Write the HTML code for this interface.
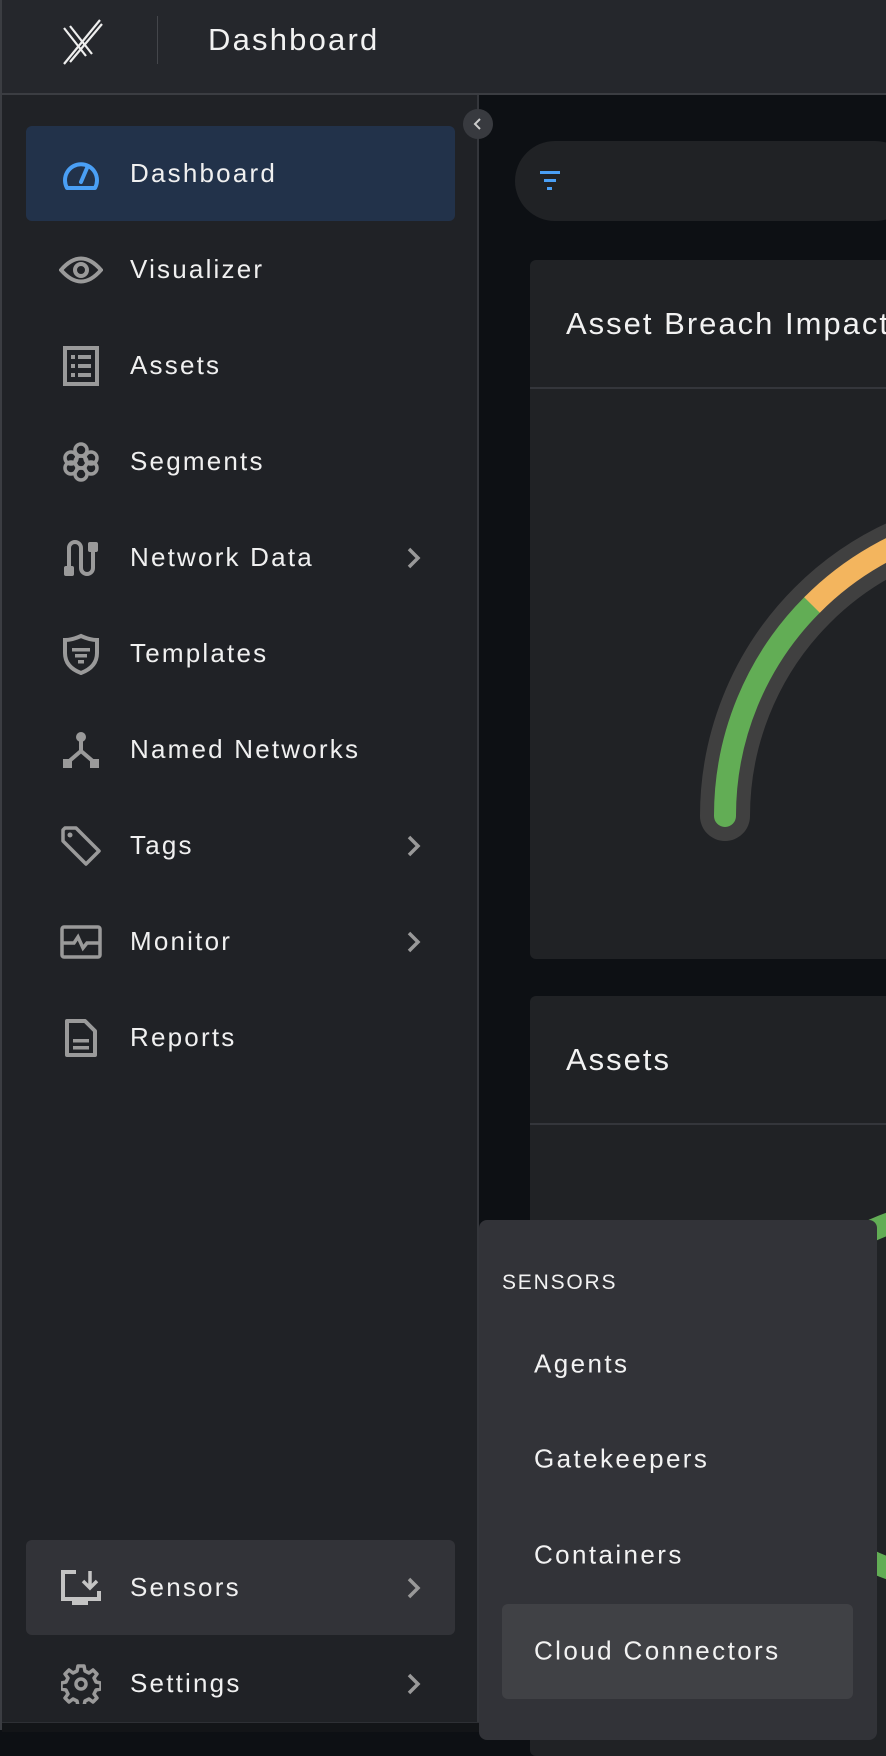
<!DOCTYPE html>
<html><head><meta charset="utf-8"><style>
*{margin:0;padding:0;box-sizing:border-box}
body{width:886px;height:1730px;overflow:hidden;background:#0d1014;font-family:"Liberation Sans",sans-serif;color:#f2f2f2;position:relative}
.abs{position:absolute}
.hdr{left:0;top:0;width:886px;height:95px;background:#25272c;border-bottom:2px solid #3b3d42;border-left:2px solid #3b3d42}
.side{left:0;top:95px;width:479px;height:1635px;background:#202226;border-right:2px solid #34363b;border-left:2px solid #3b3d42}
.item{position:absolute;left:24px;width:429px;height:95px;border-radius:6px}
.item .ic{position:absolute;left:55px;top:50%;transform:translate(-50%,-50%)}
.item .t{position:absolute;left:104px;top:50%;transform:translateY(-52%);font-size:26px;letter-spacing:2.2px;color:#f0f0f0;white-space:nowrap}
.item .ch{position:absolute;left:380px;top:50%;transform:translateY(-50%)}
.card{background:#202225;border-radius:6px}
.pop{left:479px;top:1220px;width:398px;height:520px;background:#323338;border-radius:8px}
.pop .s{position:absolute;left:55px;font-size:26px;letter-spacing:2.4px;transform:translateY(-50%);white-space:nowrap}
</style></head><body>
<div class="abs hdr">
 <svg class="abs" style="left:58px;top:16px" width="44" height="50" viewBox="0 0 44 50"><g stroke="#eee" stroke-width="2.2" fill="none"><path d="M4 12 L26 40"/><path d="M10 10 L32 38"/><path d="M4 48 L40 4"/><path d="M10 46 L42 8"/></g></svg>
 <div class="abs" style="left:155px;top:16px;width:1px;height:48px;background:#44464b"></div>
 <div class="abs" style="left:206px;top:22px;font-size:31px;letter-spacing:2.2px">Dashboard</div>
</div>
<div class="abs side">
 <div class="item" style="top:31px;background:#22324a"><svg class="ic" width="40" height="36" viewBox="0 0 40 36"><path d="M6 32 A16 16 0 1 1 34 32 Z" fill="none" stroke="#4a9ff5" stroke-width="4" stroke-linejoin="round"/><path d="M20 26 L26 12" stroke="#4a9ff5" stroke-width="4" stroke-linecap="round"/></svg><span class="t">Dashboard</span></div>
 <div class="item" style="top:127px"><svg class="ic" width="44" height="30" viewBox="0 0 44 30"><path d="M2 15 Q22 -8 42 15 Q22 38 2 15Z" fill="none" stroke="#9a9a9a" stroke-width="4"/><circle cx="22" cy="15" r="6" fill="none" stroke="#9a9a9a" stroke-width="4"/></svg><span class="t">Visualizer</span></div>
 <div class="item" style="top:223px"><svg class="ic" width="36" height="40" viewBox="0 0 36 40"><rect x="2" y="2" width="32" height="36" fill="none" stroke="#9a9a9a" stroke-width="4"/><g fill="#9a9a9a"><rect x="8" y="9" width="4" height="4"/><rect x="15" y="9" width="13" height="4"/><rect x="8" y="18" width="4" height="4"/><rect x="15" y="18" width="13" height="4"/><rect x="8" y="27" width="4" height="4"/><rect x="15" y="27" width="13" height="4"/></g></svg><span class="t">Assets</span></div>
 <div class="item" style="top:319px"><svg class="ic" width="40" height="40" viewBox="0 0 40 40"><g fill="none" stroke="#9a9a9a" stroke-width="3.5"><circle cx="20" cy="8" r="6"/><circle cx="10" cy="16" r="6"/><circle cx="30" cy="16" r="6"/><circle cx="10" cy="26" r="6"/><circle cx="30" cy="26" r="6"/><circle cx="20" cy="32" r="6"/><circle cx="20" cy="20" r="6"/></g></svg><span class="t">Segments</span></div>
 <div class="item" style="top:415px"><svg class="ic" width="40" height="40" viewBox="0 0 40 40"><path d="M8 36 V10 A6 6 0 0 1 20 10 V30 A6 6 0 0 0 32 30 V10" fill="none" stroke="#9a9a9a" stroke-width="4"/><rect x="3" y="28" width="10" height="10" rx="2" fill="#9a9a9a"/><rect x="27" y="4" width="10" height="10" rx="2" fill="#9a9a9a"/></svg><span class="t">Network Data</span><svg class="ch" width="16" height="24" viewBox="0 0 16 24"><path d="M3 3 L12 12 L3 21" fill="none" stroke="#999" stroke-width="3.5"/></svg></div>
 <div class="item" style="top:511px"><svg class="ic" width="38" height="42" viewBox="0 0 38 42"><path d="M19 3 Q28 7 35 7 V20 Q35 34 19 40 Q3 34 3 20 V7 Q10 7 19 3Z" fill="none" stroke="#9a9a9a" stroke-width="4"/><g fill="#9a9a9a"><rect x="10" y="15" width="18" height="3.5"/><rect x="13" y="21" width="12" height="3.5"/><rect x="16" y="27" width="6" height="3.5"/></g></svg><span class="t">Templates</span></div>
 <div class="item" style="top:607px"><svg class="ic" width="40" height="38" viewBox="0 0 40 38"><circle cx="20" cy="6" r="5" fill="#9a9a9a"/><path d="M20 8 V20 L6 32 M20 20 L34 32" stroke="#9a9a9a" stroke-width="4" fill="none"/><rect x="2" y="28" width="9" height="9" fill="#9a9a9a"/><rect x="29" y="28" width="9" height="9" fill="#9a9a9a"/></svg><span class="t">Named Networks</span></div>
 <div class="item" style="top:703px"><svg class="ic" width="42" height="42" viewBox="0 0 42 42"><path d="M3 5 V16 L26 39 L39 26 L16 3 H5Z" fill="none" stroke="#9a9a9a" stroke-width="3.5" stroke-linejoin="round"/><circle cx="10" cy="10" r="2.5" fill="#9a9a9a"/></svg><span class="t">Tags</span><svg class="ch" width="16" height="24" viewBox="0 0 16 24"><path d="M3 3 L12 12 L3 21" fill="none" stroke="#999" stroke-width="3.5"/></svg></div>
 <div class="item" style="top:799px"><svg class="ic" width="42" height="34" viewBox="0 0 42 34"><rect x="2" y="2" width="38" height="30" rx="2" fill="none" stroke="#9a9a9a" stroke-width="3.5"/><path d="M2 18 H14 L18 12 L23 23 L27 18 H40" fill="none" stroke="#9a9a9a" stroke-width="3.5"/></svg><span class="t">Monitor</span><svg class="ch" width="16" height="24" viewBox="0 0 16 24"><path d="M3 3 L12 12 L3 21" fill="none" stroke="#999" stroke-width="3.5"/></svg></div>
 <div class="item" style="top:895px"><svg class="ic" width="34" height="40" viewBox="0 0 34 40"><path d="M3 3 H21 L31 13 V37 H3Z" fill="none" stroke="#9a9a9a" stroke-width="4" stroke-linejoin="round"/><rect x="9" y="21" width="16" height="3.5" fill="#9a9a9a"/><rect x="9" y="28" width="16" height="3.5" fill="#9a9a9a"/></svg><span class="t">Reports</span></div>
 <div class="item" style="top:1445px;background:#323338"><svg class="ic" width="42" height="38" viewBox="0 0 42 38"><path d="M16 3 H3 V30 H39 V22" fill="none" stroke="#c4c4c4" stroke-width="4"/><rect x="12" y="30" width="16" height="6" fill="#c4c4c4"/><path d="M30 2 V18 M23 12 L30 19 L37 12" fill="none" stroke="#c4c4c4" stroke-width="3.5"/></svg><span class="t">Sensors</span><svg class="ch" width="16" height="24" viewBox="0 0 16 24"><path d="M3 3 L12 12 L3 21" fill="none" stroke="#999" stroke-width="3.5"/></svg></div>
 <div class="item" style="top:1541px"><svg class="ic" width="40" height="40" viewBox="0 0 40 40"><path d="M17 2h6l1 5 4 2 4-3 4 4-3 4 2 4 5 1v6l-5 1-2 4 3 4-4 4-4-3-4 2-1 5h-6l-1-5-4-2-4 3-4-4 3-4-2-4-5-1v-6l5-1 2-4-3-4 4-4 4 3 4-2z" fill="none" stroke="#9a9a9a" stroke-width="3.5" stroke-linejoin="round"/><circle cx="20" cy="20" r="5" fill="none" stroke="#9a9a9a" stroke-width="3.5"/></svg><span class="t">Settings</span><svg class="ch" width="16" height="24" viewBox="0 0 16 24"><path d="M3 3 L12 12 L3 21" fill="none" stroke="#999" stroke-width="3.5"/></svg></div>
 <div class="abs" style="left:0;top:1627px;width:548px;height:10px;background:#131518;border-top:1px solid #2e3035"></div>
</div>
<div class="abs" style="left:463px;top:109px;width:30px;height:30px;border-radius:50%;background:#383a3f"><svg class="abs" style="left:9px;top:8px" width="12" height="14" viewBox="0 0 12 14"><path d="M8 2 L3 7 L8 12" fill="none" stroke="#ccc" stroke-width="2"/></svg></div>
<div class="abs" style="left:515px;top:141px;width:400px;height:80px;border-radius:40px;background:#202225"><svg class="abs" style="left:23px;top:28px" width="24" height="24" viewBox="0 0 24 24"><g fill="#4a9ff5"><rect x="2" y="2" width="20" height="3"/><rect x="6" y="10" width="12" height="3"/><rect x="9" y="18" width="5" height="3"/></g></svg></div>
<div class="abs card" style="left:530px;top:260px;width:400px;height:699px;overflow:hidden">
 <div class="abs" style="left:36px;top:46px;font-size:31px;letter-spacing:2px;white-space:nowrap">Asset Breach Impact</div>
 <div class="abs" style="left:0;top:127px;width:400px;height:2px;background:#34363b"></div>
 <svg class="abs" style="left:0;top:0" width="400" height="699"><path d="M195 556 A298 298 0 0 1 493 258" fill="none" stroke="#404040" stroke-width="50" stroke-linecap="round"/><path d="M195 556 A298 298 0 0 1 282 345" fill="none" stroke="#62ad55" stroke-width="22" stroke-linecap="round"/><path d="M282 345 A298 298 0 0 1 420 266" fill="none" stroke="#f3b55e" stroke-width="22"/></svg>
</div>
<div class="abs card" style="left:530px;top:996px;width:400px;height:760px;overflow:hidden">
 <div class="abs" style="left:36px;top:46px;font-size:31px;letter-spacing:2px">Assets</div>
 <div class="abs" style="left:0;top:127px;width:400px;height:2px;background:#34363b"></div>
 <svg class="abs" style="left:0;top:0" width="400" height="760"><circle cx="420" cy="400" r="183" fill="none" stroke="#62ad55" stroke-width="22"/></svg>
</div>
<div class="abs pop">
 <div class="s" style="top:63px;font-size:21px;left:23px;letter-spacing:1.8px">SENSORS</div>
 <div class="s" style="top:144px">Agents</div>
 <div class="s" style="top:239px">Gatekeepers</div>
 <div class="s" style="top:335px">Containers</div>
 <div class="abs" style="left:23px;top:384px;width:351px;height:95px;border-radius:6px;background:#404145"></div>
 <div class="s" style="top:431px">Cloud Connectors</div>
</div>
</body></html>
